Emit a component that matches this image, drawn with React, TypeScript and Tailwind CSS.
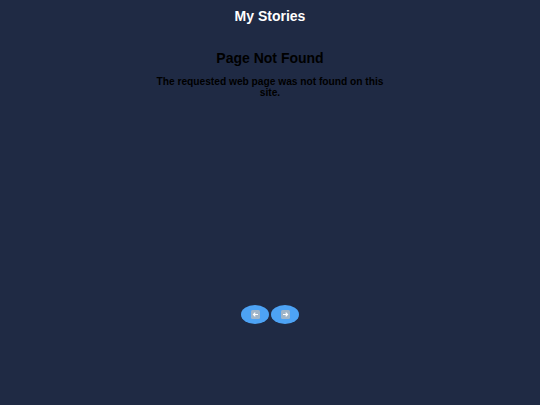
import React from "react";

function ArrowIcon({ dir }: { dir: "left" | "right" }) {
  return (
    <svg width="9" height="9" viewBox="0 0 9 9">
      <rect x="0" y="0" width="9" height="9" rx="1.5" fill="#9fb4c8" />
      {dir === "left" ? (
        <path d="M7 4.5H2.5M4.3 2.7L2.5 4.5L4.3 6.3" stroke="#fff" strokeWidth="1.2" fill="none" />
      ) : (
        <path d="M2 4.5H6.5M4.7 2.7L6.5 4.5L4.7 6.3" stroke="#fff" strokeWidth="1.2" fill="none" />
      )}
    </svg>
  );
}

export default function App() {
  return (
    <div
      className="w-[540px] h-[405px] bg-[#1f2a44] flex flex-col items-center"
      style={{ fontFamily: '"Liberation Sans", Arial, sans-serif' }}
    >
      <h1 className="mt-[8px] text-[14px] leading-[16px] font-bold text-white">My Stories</h1>
      <h2 className="mt-[26px] text-[14px] leading-[16px] font-bold text-black">Page Not Found</h2>
      <p className="mt-[10px] w-[232px] text-center text-[10.2px] leading-[11px] font-bold text-black">
        The requested web page was not found on this site.
      </p>
      <div className="mt-[207px] flex gap-[2px]">
        <button className="w-[28px] h-[19px] rounded-[50%] bg-[#4da3f5] flex items-center justify-center">
          <ArrowIcon dir="left" />
        </button>
        <button className="w-[28px] h-[19px] rounded-[50%] bg-[#4da3f5] flex items-center justify-center">
          <ArrowIcon dir="right" />
        </button>
      </div>
    </div>
  );
}
